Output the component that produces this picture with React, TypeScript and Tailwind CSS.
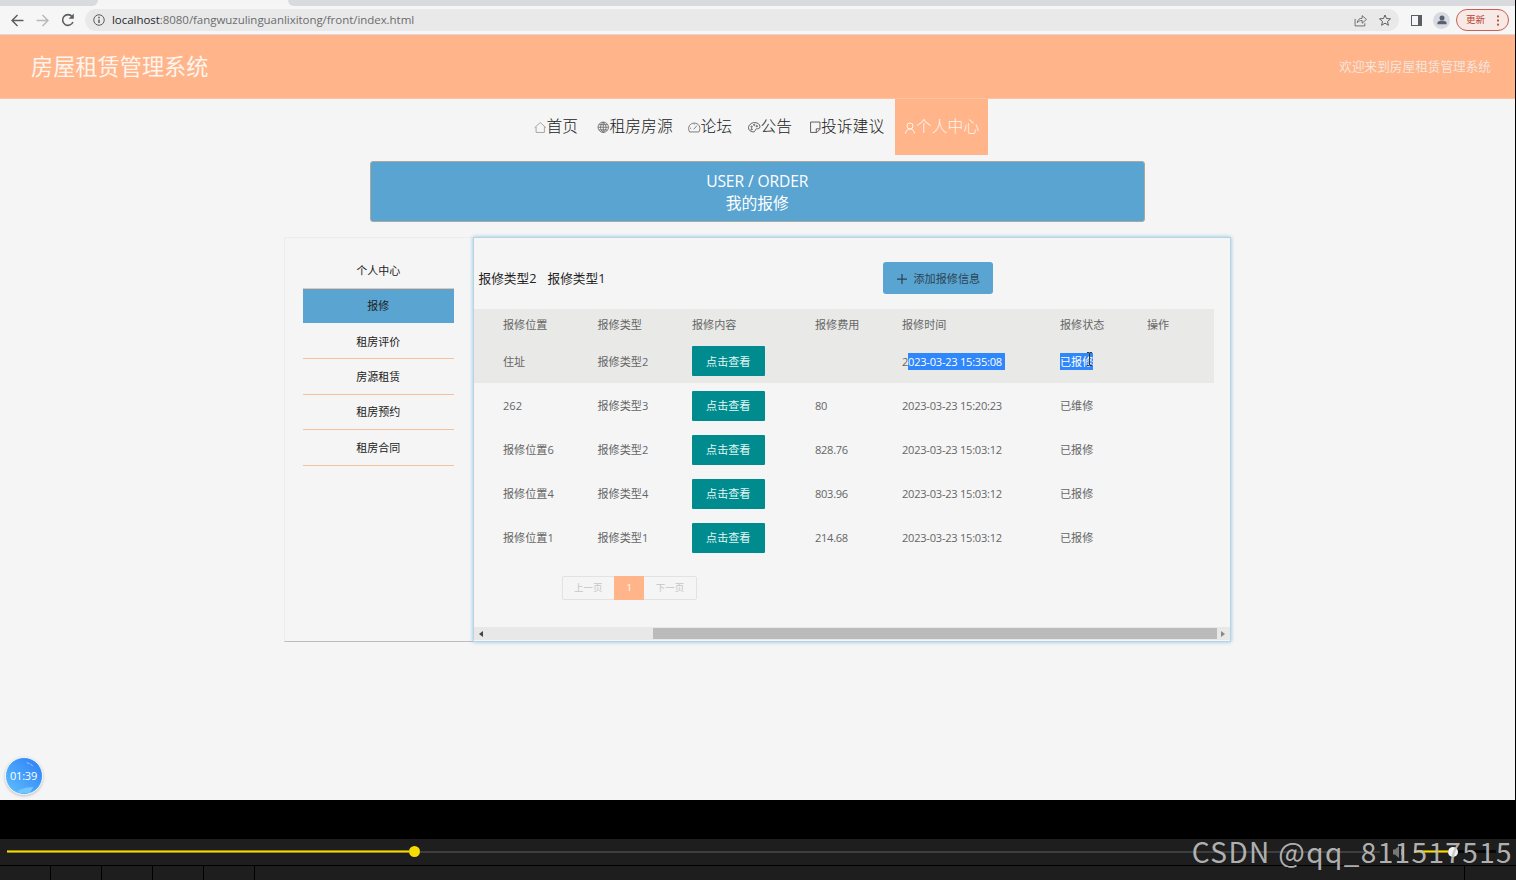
import { type ReactElement, type ReactNode } from "react";
import { clsx } from "clsx";

type IconProps = { className?: string; children: ReactNode };

const Icon = ({ className, children }: IconProps): ReactElement => (
    <svg
        className={clsx("shrink-0", className)}
        viewBox="0 0 24 24"
        fill="none"
        stroke="currentColor"
        strokeWidth={1.6}
    >
        {children}
    </svg>
);

const navItems = [
    {
        label: "首页",
        width: "w-[63px]",
        icon: <path d="M1 13 12 3l11 10M4 11v11h16V11" />,
        tone: "text-[#999]",
    },
    {
        label: "租房房源",
        width: "w-[91px]",
        icon: (
            <path d="M12 2a10 10 0 1 0 0 20 10 10 0 0 0 0-20zM2 12h20M12 2v20M4 7h16M4 17h16M12 2C5 8 5 16 12 22M12 2c7 6 7 14 0 20" />
        ),
        tone: "text-[#666]",
    },
    {
        label: "论坛",
        width: "w-[60px]",
        icon: <path d="M3 21C-2 12 4 4 12 4s14 8 9 17zM11 16l6-7M4 14h2M12 5v2" />,
        tone: "text-[#666]",
    },
    {
        label: "公告",
        width: "w-[60.5px]",
        icon: (
            <>
                <path d="M13 3C6 3 1 8 1 13s5 8 9 8c5 0 3-5 6-6 3 0 7 0 7-4 0-5-5-8-10-8z" />
                <circle cx="7" cy="11" r="1.3" />
                <circle cx="12" cy="7.5" r="1.3" />
                <circle cx="17" cy="10" r="1.3" />
                <circle cx="7" cy="16" r="1.3" />
            </>
        ),
        tone: "text-[#444]",
    },
    {
        label: "投诉建议",
        width: "w-[86.5px]",
        icon: <path d="M3 2h18v14l-6 6H3zM21 15h-7v7" />,
        tone: "text-[#444]",
    },
];

const menuItems = ["个人中心", "报修", "租房评价", "房源租赁", "租房预约", "租房合同"];

const headers = ["报修位置", "报修类型", "报修内容", "报修费用", "报修时间", "报修状态", "操作"];

const rows = [
    { place: "住址", type: "报修类型2", cost: "", time: "2023-03-23 15:35:08", status: "已报修" },
    { place: "262", type: "报修类型3", cost: "80", time: "2023-03-23 15:20:23", status: "已维修" },
    { place: "报修位置6", type: "报修类型2", cost: "828.76", time: "2023-03-23 15:03:12", status: "已报修" },
    { place: "报修位置4", type: "报修类型4", cost: "803.96", time: "2023-03-23 15:03:12", status: "已报修" },
    { place: "报修位置1", type: "报修类型1", cost: "214.68", time: "2023-03-23 15:03:12", status: "已报修" },
];

const columns =
    "grid grid-cols-[94.5px_94.5px_123px_87px_158px_87px_67px] items-center pl-[29.5px] w-[740.5px]";

const BrowserBar = (): ReactElement => (
    <div className="shrink-0">
        {/* Tab strip */}
        <div className="flex h-[6px] justify-between bg-[#f5f5f5]">
            <div className="w-[98px] rounded-br-[6px] bg-[#d9dade]" />
            <div className="w-[1227px] rounded-bl-[6px] bg-[#d9dade]" />
        </div>

        {/* Toolbar */}
        <div className="flex h-[29px] items-center border-b border-[#ddd8d5] bg-[#f6f6f6] pl-[11px] pr-[6px] text-[#5b5e62]">
            <Icon className="size-[13px]">
                <path d="M23 12H2M12 2 2 12l10 10" strokeWidth={2.7} />
            </Icon>
            <Icon className="ml-[12px] size-[13px] text-[#b7b8ba]">
                <path d="M1 12h21M12 2l10 10-10 10" strokeWidth={2.7} />
            </Icon>
            <Icon className="ml-[12px] size-[14px]">
                <path d="M20.5 15.5a9.200 9.200 0 1 1-1.500-9.500" strokeWidth={2.7} />
                <path d="M22 1v9h-9z" fill="currentColor" stroke="none" />
            </Icon>
            <div className="ml-[10px] flex h-[22px] w-[1314px] shrink-0 items-center rounded-full bg-[#e9e9e9] pl-[8px] pr-[8px]">
                <Icon className="size-[12px]">
                    <circle cx="12" cy="12" r="10.5" strokeWidth={2} />
                    <path d="M12 11v7M12 5.500v3" strokeWidth={3} />
                </Icon>
                <span className="ml-[7px] flex-1 whitespace-nowrap text-[11.5px] tracking-[-0.045px] text-[#6a6c6f]">
                    <span className="text-[#26282b]">localhost</span>
                    :8080/fangwuzulinguanlixitong/front/index.html
                </span>
                <Icon className="size-[13px]">
                    <path d="M2 9v13h18v-5M6 16c1-6 4-8 9-8V3l8 7-8 7v-5c-4 0-6 1-9 4z" />
                </Icon>
                <Icon className="ml-[12px] size-[12px]">
                    <path
                        d="m12 2 3 7 8 .7-6 5.300 1.800 7.500L12 18.400 5.200 22.500 7 15 1 9.700 9 9z"
                        strokeWidth={2}
                    />
                </Icon>
            </div>
            <div className="ml-[12px] h-[11px] w-[11px] shrink-0 border-[1.5px] border-r-[4px] border-[#5b5e62]" />
            <div className="ml-[11px] flex size-[17px] shrink-0 items-center justify-center rounded-full bg-[#d8dae0] text-[#5a6070]">
                <svg className="size-[10px]" viewBox="0 0 24 24" fill="currentColor">
                    <circle cx="12" cy="7" r="6" />
                    <path d="M1 22v-3c0-4 6-5 11-5s11 1 11 5v3z" />
                </svg>
            </div>
            <div className="ml-[6px] flex h-[22px] w-[53px] shrink-0 items-center rounded-full border border-[#c9604f] bg-[#f7e9e6] pl-[9px] text-[9.5px] text-[#bd3f2d]">
                更新
                <svg className="ml-[11px] h-[11px] w-[4px]" viewBox="0 0 4 12" fill="currentColor">
                    <rect x="1" y="0.5" width="2" height="2" />
                    <rect x="1" y="5" width="2" height="2" />
                    <rect x="1" y="9.5" width="2" height="2" />
                </svg>
            </div>
        </div>
    </div>
);

const Navbar = (): ReactElement => (
    <nav className="flex h-[56px] shrink-0 items-center pl-[534px] text-[15.8px] font-light text-[#222]">
        {navItems.map((item) => (
            <div key={item.label} className={clsx("flex items-center whitespace-nowrap", item.width)}>
                <Icon className={clsx("mt-[1px] size-[12.5px]", item.tone)}>{item.icon}</Icon>
                {item.label}
            </div>
        ))}
        <div className="flex h-full w-[93px] items-center whitespace-nowrap bg-[#ffb48a] pl-[9px] text-[#fff6f0]">
            <Icon className="mt-[1px] size-[12px]">
                <circle cx="12" cy="8" r="6" strokeWidth={2} />
                <path d="M3 23c1-6 4-9 9-9s8 3 9 9" strokeWidth={2} />
            </Icon>
            个人中心
        </div>
    </nav>
);

const Sidebar = (): ReactElement => (
    <aside className="h-[404.5px] w-[189px] border border-r-0 border-[#ececec] border-b-[#bcbcbc] px-[18px] pt-[15.2px]">
        {menuItems.map((label, i) => (
            <div
                key={label}
                className={clsx(
                    "flex h-[35.4px] w-[151.5px] items-center justify-center border-b border-solid text-[11px] text-[#222]",
                    i === 1 ? "border-b-[#f5f5f5] bg-[#5aa4d1]" : "border-b-[#f6bf9f]"
                )}
            >
                {label}
            </div>
        ))}
    </aside>
);

const RepairTable = (): ReactElement => (
    <div className="text-[11.1px] text-[#666]">
        <div className={clsx(columns, "h-[30px] bg-[#e9e9e8] pt-[1px]")}>
            {headers.map((header) => (
                <span key={header}>{header}</span>
            ))}
        </div>
        {rows.map((row, i) => (
            <div key={i} className={clsx(columns, "h-[44.15px]", i === 0 && "bg-[#e9e9e8]")}>
                <span>{row.place}</span>
                <span>{row.type}</span>
                <button className="h-[30px] w-[72.5px] rounded-[1px] bg-[#008c8f] text-[#e4f6f4]">点击查看</button>
                <span className="tracking-[-0.3px]">{row.cost}</span>
                {i === 0 ? (
                    <>
                        <span className="tracking-[-0.25px]">
                            2<span className="bg-[#2f87fb] py-[1px] pr-[3px] text-white">{row.time.slice(1)}</span>
                        </span>
                        <span className="relative">
                            <span className="bg-[#2f87fb] py-[1px] text-white">{row.status}</span>
                            {/* Text cursor */}
                            <svg
                                className="absolute -top-[4px] left-[26px] h-[14px] w-[7px]"
                                viewBox="0 0 7 14"
                                fill="none"
                                stroke="#333"
                            >
                                <path d="M1 .5h2l.5 1 .5-1h2M3.500 1v12M1 13.500h2l.5-1 .5 1h2" />
                            </svg>
                        </span>
                    </>
                ) : (
                    <>
                        <span className="tracking-[-0.25px]">{row.time}</span>
                        <span>{row.status}</span>
                    </>
                )}
            </div>
        ))}
    </div>
);

const RepairPanel = (): ReactElement => (
    <main className="flex h-[404.5px] w-[758.5px] flex-col border border-[#b4d5e5] shadow-[0_0_4px_#8fc2dc]">
        <div className="flex h-[71.3px] shrink-0 items-start pl-[5px] text-[12.7px] text-[#222]">
            <span className="mt-[33.5px] w-[69px]">报修类型2</span>
            <span className="mt-[33.5px] w-[335px]">报修类型1</span>
            <button className="mt-[24px] flex h-[31.5px] w-[110px] items-center rounded-[3px] bg-[#5aa4d1] pl-[14px] pt-[2px] text-[11.1px] text-[#2b4352]">
                <Icon className="mr-[7px] size-[10px]">
                    <path d="M12 0v24M0 12h24" strokeWidth={3} />
                </Icon>
                添加报修信息
            </button>
        </div>

        <RepairTable />

        {/* Pagination */}
        <div className="ml-[88px] mt-[15.5px] flex h-[24px] w-[135.5px] shrink-0 rounded-[2px] border border-[#e2e2e2] text-[9.5px] text-[#c6c6c6]">
            <span className="flex flex-1 items-center justify-center">上一页</span>
            <span className="-my-px flex w-[30px] items-center justify-center bg-[#ffb48a] text-white">1</span>
            <span className="flex flex-1 items-center justify-center">下一页</span>
        </div>

        {/* Horizontal scrollbar */}
        <div className="mb-[0.5px] mt-auto flex h-[13px] items-center justify-between bg-[#e8e8e8] px-[5px]">
            <svg className="h-[6px] w-[4px]" viewBox="0 0 4 6" fill="#444">
                <path d="M4 0v6L0 3z" />
            </svg>
            <div className="ml-auto mr-[4.5px] h-[11px] w-[564px] bg-[#bbb]" />
            <svg className="h-[6px] w-[4px]" viewBox="0 0 4 6" fill="#888">
                <path d="M0 0v6l4-3z" />
            </svg>
        </div>
    </main>
);

const Player = (): ReactElement => (
    <div className="h-[80px] bg-black pt-[39px]">
        <div className="flex h-[26px] items-center bg-[#1e1e1e] pb-[1px] pl-[7px]">
            <div className="h-[3px] w-[402px] border-y border-[#9b8a0c] bg-[#f5dc05]" />
            <div className="size-[11px] rounded-full bg-[#f5dc05]" />
            <div className="h-[2px] w-[960px] bg-[#3e3e3e]" />
            <svg className="ml-[13px] h-[12px] w-[12px]" viewBox="0 0 12 12" fill="#777">
                <path d="M0 3.500h2L6 0v12L2 8.500H0zM8 3h1v6H8zM10 1h1v10h-1z" />
            </svg>
            <div className="ml-[9px] h-[3px] w-[34px] border-y border-[#9b8a0c] bg-[#f5dc05]" />
            <div className="size-[10px] rounded-full bg-[#f4f4f4]" />
            <div className="h-[3px] w-[38px] bg-[#080808]" />
        </div>
        <div className="mt-px flex h-[14px] bg-[#1e1e1e]">
            {[0, 1, 2, 3, 4].map((cell) => (
                <div key={cell} className="w-[51px] border-r border-black" />
            ))}
            <div className="w-[1210px] border-r border-black" />
        </div>
    </div>
);

const App = (): ReactElement => (
    <div className="relative h-[880px] w-[1516px] overflow-hidden bg-black font-['Open_Sans','Noto_Sans_CJK_SC',sans-serif] leading-none">
        <div className="flex h-[800px] w-[1515px] flex-col overflow-hidden bg-[#f5f5f5]">
            <BrowserBar />

            <header className="flex h-[64px] shrink-0 items-center justify-between border-b border-[#fbc3a2] bg-[#ffb48a] pl-[31px] pr-[24px]">
                <h1 className="pt-[1px] text-[22.2px] text-[#fdf4ee]">房屋租赁管理系统</h1>
                <span className="text-[12.65px] text-[#f5e5dc]">欢迎来到房屋租赁管理系统</span>
            </header>

            <Navbar />

            <section className="ml-[370px] mt-[6px] flex h-[61px] w-[774.5px] shrink-0 flex-col items-center justify-center rounded-[3px] border border-[#a9a9a0] bg-[#5aa4d1] text-[15.8px] leading-[22px] text-white">
                <span className="text-[15.6px] tracking-[-0.1px]">USER / ORDER</span>
                <span>我的报修</span>
            </section>

            <div className="ml-[283.5px] mt-[15px] flex">
                <Sidebar />
                <RepairPanel />
            </div>
        </div>

        <Player />

        {/* Recording timer */}
        <div className="absolute left-[5px] top-[757px] flex size-[38px] items-center justify-center overflow-hidden rounded-full border border-[#e8f3fb] bg-linear-to-tr from-[#5fc0fb] to-[#2f7bf8] pb-[1px] pr-[1px] text-[11px] tracking-[-0.2px] text-white shadow-[0_1px_3px_#bbb]">
            <svg className="absolute inset-0 size-full" viewBox="0 0 38 38" fill="none">
                <path d="M22 5q4 1 7 4" stroke="#a5d2fd" strokeDasharray="3 1" />
                <path d="M12 35q8-5 17-4l-4 6H14z" fill="#72c6fb" />
            </svg>
            <span className="relative">01:39</span>
        </div>

        <div className="absolute right-[3px] top-[834px] whitespace-nowrap font-['Noto_Sans_CJK_SC',sans-serif] text-[28px] leading-[34px] tracking-[1.38px] text-[#c4c4c4]/90">
            CSDN @qq_811517515
        </div>
    </div>
);
export default App;
